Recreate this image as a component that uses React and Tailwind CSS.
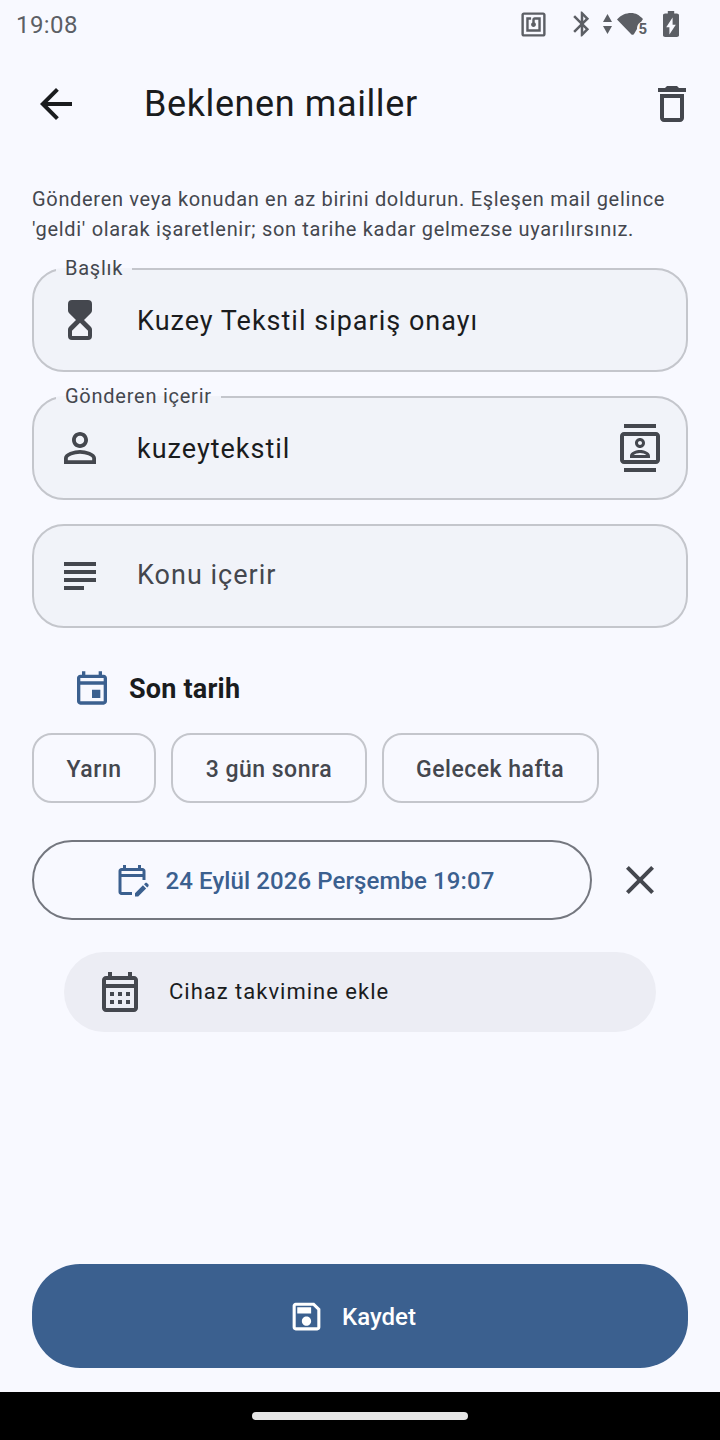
const P = {
  back: "M20 11H7.83l5.59-5.59L12 4l-8 8 8 8 1.41-1.41L7.83 13H20v-2z",
  del: "M6 19c0 1.1.9 2 2 2h8c1.1 0 2-.9 2-2V7H6v12zM8 9h8v10H8V9zm7.5-5l-1-1h-5l-1 1H5v2h14V4h-3.5z",
  hour: "M8 2h8a2 2 0 0 1 2 2v3.2c0 .5-.2 1-.6 1.4L14 12l3.4 3.4c.4.4.6.9.6 1.4V20a2 2 0 0 1-2 2H8a2 2 0 0 1-2-2v-3.2c0-.5.2-1 .6-1.4L10 12 6.6 8.6C6.2 8.2 6 7.7 6 7.2V4a2 2 0 0 1 2-2zM12 13.4l-4 4V20h8v-2.6z",
  person: "M12 5.9c1.16 0 2.1.94 2.1 2.1s-.94 2.1-2.1 2.1S9.9 9.16 9.9 8s.94-2.1 2.1-2.1m0 9c2.97 0 6.1 1.46 6.1 2.1v1.1H5.9V17c0-.64 3.13-2.1 6.1-2.1M12 4C9.79 4 8 5.79 8 8s1.79 4 4 4 4-1.79 4-4-1.79-4-4-4zm0 9c-2.67 0-8 1.34-8 4v3h16v-3c0-2.66-5.33-4-8-4z",
  contacts: "M20 0H4v2h16V0zM4 24h16v-2H4v2zM20 4H4c-1.1 0-2 .9-2 2v12c0 1.1.9 2 2 2h16c1.1 0 2-.9 2-2V6c0-1.1-.9-2-2-2zm0 14H4V6h16v12zm-8-6c1.38 0 2.5-1.12 2.5-2.5S13.38 7 12 7 9.5 8.12 9.5 9.5 10.62 12 12 12zm0-3.5c.55 0 1 .45 1 1s-.45 1-1 1-1-.45-1-1 .45-1 1-1zm5 7.49C17 13.9 13.69 13 12 13s-5 .9-5 2.99V17h10v-1.01zm-8.19-.49c.61-.52 2.03-1 3.19-1 1.17 0 2.59.48 3.2 1H8.81z",
  subject: "M14 17H4v2h10v-2zm6-8H4v2h16V9zM4 15h16v-2H4v2zM4 5v2h16V5H4z",
  event: "M19 4h-1V2h-2v2H8V2H6v2H5c-1.1 0-2 .9-2 2v14c0 1.1.9 2 2 2h14c1.1 0 2-.9 2-2V6c0-1.1-.9-2-2-2zm0 16H5V10h14v10zm0-12H5V6h14v2zm-2 5h-5v5h5v-5z",
  edit: "M5 10h14v2h2V6c0-1.1-.9-2-2-2h-1V2h-2v2H8V2H6v2H5c-1.11 0-1.99.9-1.99 2L3 20c0 1.1.89 2 2 2h7v-2H5V10zm0-4h14v2H5V6zm17.84 10.28l-.71.71-2.12-2.12.71-.71c.39-.39 1.02-.39 1.41 0l.71.71c.39.39.39 1.02 0 1.41zm-3.54-.7l2.12 2.12-5.3 5.3H14v-2.12l5.3-5.3z",
  close: "M19 6.41L17.59 5 12 10.59 6.41 5 5 6.41 10.59 12 5 17.59 6.41 19 12 13.41 17.59 19 19 17.59 13.41 12z",
  month: "M19 4h-1V2h-2v2H8V2H6v2H5c-1.1 0-2 .9-2 2v14c0 1.1.9 2 2 2h14c1.1 0 2-.9 2-2V6c0-1.1-.9-2-2-2zm0 16H5V10h14v10zm0-12H5V6h14v2zM9 14H7v-2h2v2zm4 0h-2v-2h2v2zm4 0h-2v-2h2v2zm-8 4H7v-2h2v2zm4 0h-2v-2h2v2zm4 0h-2v-2h2v2z",
  save: "M17 3H5c-1.11 0-2 .9-2 2v14c0 1.1.89 2 2 2h14c1.1 0 2-.9 2-2V7l-4-4zm2 16H5V5h11.17L19 7.83V19zm-7-7c-1.66 0-3 1.34-3 3s1.34 3 3 3 3-1.34 3-3-1.34-3-3-3zM6 6h9v4H6z",
  nfc: "M20 2H4c-1.1 0-2 .9-2 2v16c0 1.1.9 2 2 2h16c1.1 0 2-.9 2-2V4c0-1.1-.9-2-2-2zm0 18H4V4h16v16zM18 6h-5c-1.1 0-2 .9-2 2v2.28c-.6.35-1 .98-1 1.72 0 1.1.9 2 2 2s2-.9 2-2c0-.74-.4-1.38-1-1.72V8h3v8H8V8h2V6H6v12h12V6z",
  bt: "M17.71 7.71L12 2h-1v7.59L6.41 5 5 6.41 10.59 12 5 17.59 6.41 19 11 14.41V22h1l5.71-5.71-4.3-4.29 4.3-4.29zM13 5.83l1.88 1.88L13 9.59V5.83zm1.88 10.46L13 18.17v-3.76l1.88 1.88z",
};

function Icon({ d, className, evenodd }) {
  return (
    <svg viewBox="0 0 24 24" className={className} fill="currentColor" fillRule={evenodd ? "evenodd" : undefined}>
      <path d={d} />
    </svg>
  );
}

function StatusBar() {
  return (
    <div className="flex h-[48px] shrink-0 items-center pl-[16px] text-[#5c5f65]">
      <span className="pt-[2px] text-[24px] leading-[48px] tracking-[0.4px]">19:08</span>
      <div className="ml-auto flex items-center">
        <Icon d={P.nfc} className="mr-[19px] h-[29px] w-[29px]" />
        <Icon d={P.bt} className="mr-[6px] h-[30px] w-[30px]" />
        <svg viewBox="0 0 9 20" className="mr-[5px] h-[20px] w-[9px]" fill="currentColor">
          <path d="M4.5 0 9 8H0zM0 12h9l-4.5 8z" />
        </svg>
        <div className="relative mr-[16px] h-[24px] w-[30px]">
          <svg viewBox="0 0 30 24" className="h-[24px] w-[30px]" fill="currentColor">
            <path d="M0 7.5C4 3 9 1 14 1s8 2 12 6l-2 3c-1.5.4-4 2.5-4 7l-3 5a2 2 0 0 1-3 0z" />
          </svg>
          <span className="absolute bottom-[-1px] right-[0px] text-[15px] font-bold leading-[15px]">5</span>
        </div>
        <svg viewBox="7 2 10 20" preserveAspectRatio="none" className="mr-[41px] h-[26px] w-[16px]" fill="currentColor">
          <path d="M15.67 4H14V2h-4v2H8.33C7.6 4 7 4.6 7 5.33v15.33C7 21.4 7.6 22 8.33 22h7.33c.74 0 1.34-.6 1.34-1.33V5.33C17 4.6 16.4 4 15.67 4zM11 20v-5.5H9L13 7v5.5h2L11 20z" />
        </svg>
      </div>
    </div>
  );
}

function Field({ label, icon, iconEvenodd, value, placeholder, trailing }) {
  const inner = (
    <div className="flex h-full items-center">
      <Icon d={icon} evenodd={iconEvenodd} className="ml-[22px] h-[48px] w-[48px] shrink-0 text-[#44474e]" />
      <span className={`ml-[33px] text-[27px] tracking-[1px] ${value ? "pt-[2px] text-[#1a1c1e]" : "pb-[1px] text-[#44474e]"}`}>
        {value || placeholder}
      </span>
      {trailing && <Icon d={trailing} className="ml-auto mr-[22px] h-[48px] w-[48px] text-[#44474e]" />}
    </div>
  );
  if (label) {
    return (
      <fieldset className="mx-[32px] mt-[15px] h-[113px] rounded-[32px] border-2 border-[#c4c6cc] bg-[#f1f3f9]">
        <legend className="ml-[22px] h-[20px] px-[9px] text-[20px] leading-[18px] tracking-[0.75px] text-[#44474e]">
          {label}
        </legend>
        <div className="h-[82px]">{inner}</div>
      </fieldset>
    );
  }
  return (
    <div className="mx-[32px] mt-[24px] h-[104px] rounded-[32px] border-2 border-[#c4c6cc] bg-[#f1f3f9]">{inner}</div>
  );
}

function Chip({ children }) {
  return (
    <div className="flex h-[70px] items-center rounded-[20px] border-2 border-[#c4c6cc] px-[32.5px] pt-[5px] text-[23px] font-medium tracking-[0.5px] text-[#44474e]">
      {children}
    </div>
  );
}

export default function App() {
  return (
    <div className="flex h-[1440px] w-[720px] flex-col overflow-hidden bg-[#f8f9ff] font-['Roboto',sans-serif]">
      <StatusBar />
      <header className="flex h-[112px] shrink-0 items-center pl-[32px] pr-[24px]">
        <Icon d={P.back} className="h-[48px] w-[48px] text-[#1a1c1e]" />
        <h1 className="ml-[64px] text-[36px] font-normal tracking-[0.6px] text-[#1a1c1e]">Beklenen mailler</h1>
        <Icon d={P.del} className="ml-auto h-[48px] w-[48px] text-[#44474e]" />
      </header>

      <p className="mx-[32px] mt-[24px] whitespace-nowrap text-[20px] leading-[30px] tracking-[0.68px] text-[#44474e]">
        Gönderen veya konudan en az birini doldurun. Eşleşen mail gelince
        <br />
        'geldi' olarak işaretlenir; son tarihe kadar gelmezse uyarılırsınız.
      </p>

      <div>
        <Field label="Başlık" icon={P.hour} iconEvenodd value="Kuzey Tekstil sipariş onayı" />
        <Field label="Gönderen içerir" icon={P.person} value="kuzeytekstil" trailing={P.contacts} />
        <Field icon={P.subject} placeholder="Konu içerir" />
      </div>

      <div className="mt-[40px] flex h-[40px] items-center pl-[72px]">
        <Icon d={P.event} className="h-[40px] w-[40px] text-[#3b608f]" />
        <span className="ml-[17px] pt-[2px] text-[27px] font-bold tracking-[0.2px] text-[#1a1c1e]">Son tarih</span>
      </div>

      <div className="mx-[32px] mt-[25px] flex gap-[15px]">
        <Chip>Yarın</Chip>
        <Chip>3 gün sonra</Chip>
        <Chip>Gelecek hafta</Chip>
      </div>

      <div className="mt-[37px] flex items-center pl-[32px]">
        <div className="flex h-[80px] w-[560px] items-center justify-center rounded-full border-2 border-[#74777f] pr-[16px] text-[#3b608f]">
          <Icon d={P.edit} className="h-[36px] w-[36px]" />
          <span className="ml-[16px] pt-[2px] text-[24px] font-medium tracking-[0.1px]">24 Eylül 2026 Perşembe 19:07</span>
        </div>
        <Icon d={P.close} className="ml-[24px] h-[48px] w-[48px] text-[#44474e]" />
      </div>

      <div className="mx-[64px] mt-[32px] flex h-[80px] items-center rounded-full bg-[#ecedf4] pl-[32px]">
        <Icon d={P.month} className="h-[48px] w-[48px] text-[#44474e]" />
        <span className="ml-[25px] pb-[2px] text-[22px] tracking-[1px] text-[#1a1c1e]">Cihaz takvimine ekle</span>
      </div>

      <div className="flex-1" />

      <div className="mx-[32px] mb-[24px] flex h-[104px] items-center justify-center rounded-[48px] bg-[#3b608f] pr-[16px] text-white">
        <Icon d={P.save} className="h-[37px] w-[37px]" />
        <span className="ml-[17px] pt-[2px] text-[24px] font-medium">Kaydet</span>
      </div>

      <div className="flex h-[48px] shrink-0 items-center justify-center bg-black">
        <div className="h-[8px] w-[216px] rounded-full bg-[#e6e6e6]" />
      </div>
    </div>
  );
}
